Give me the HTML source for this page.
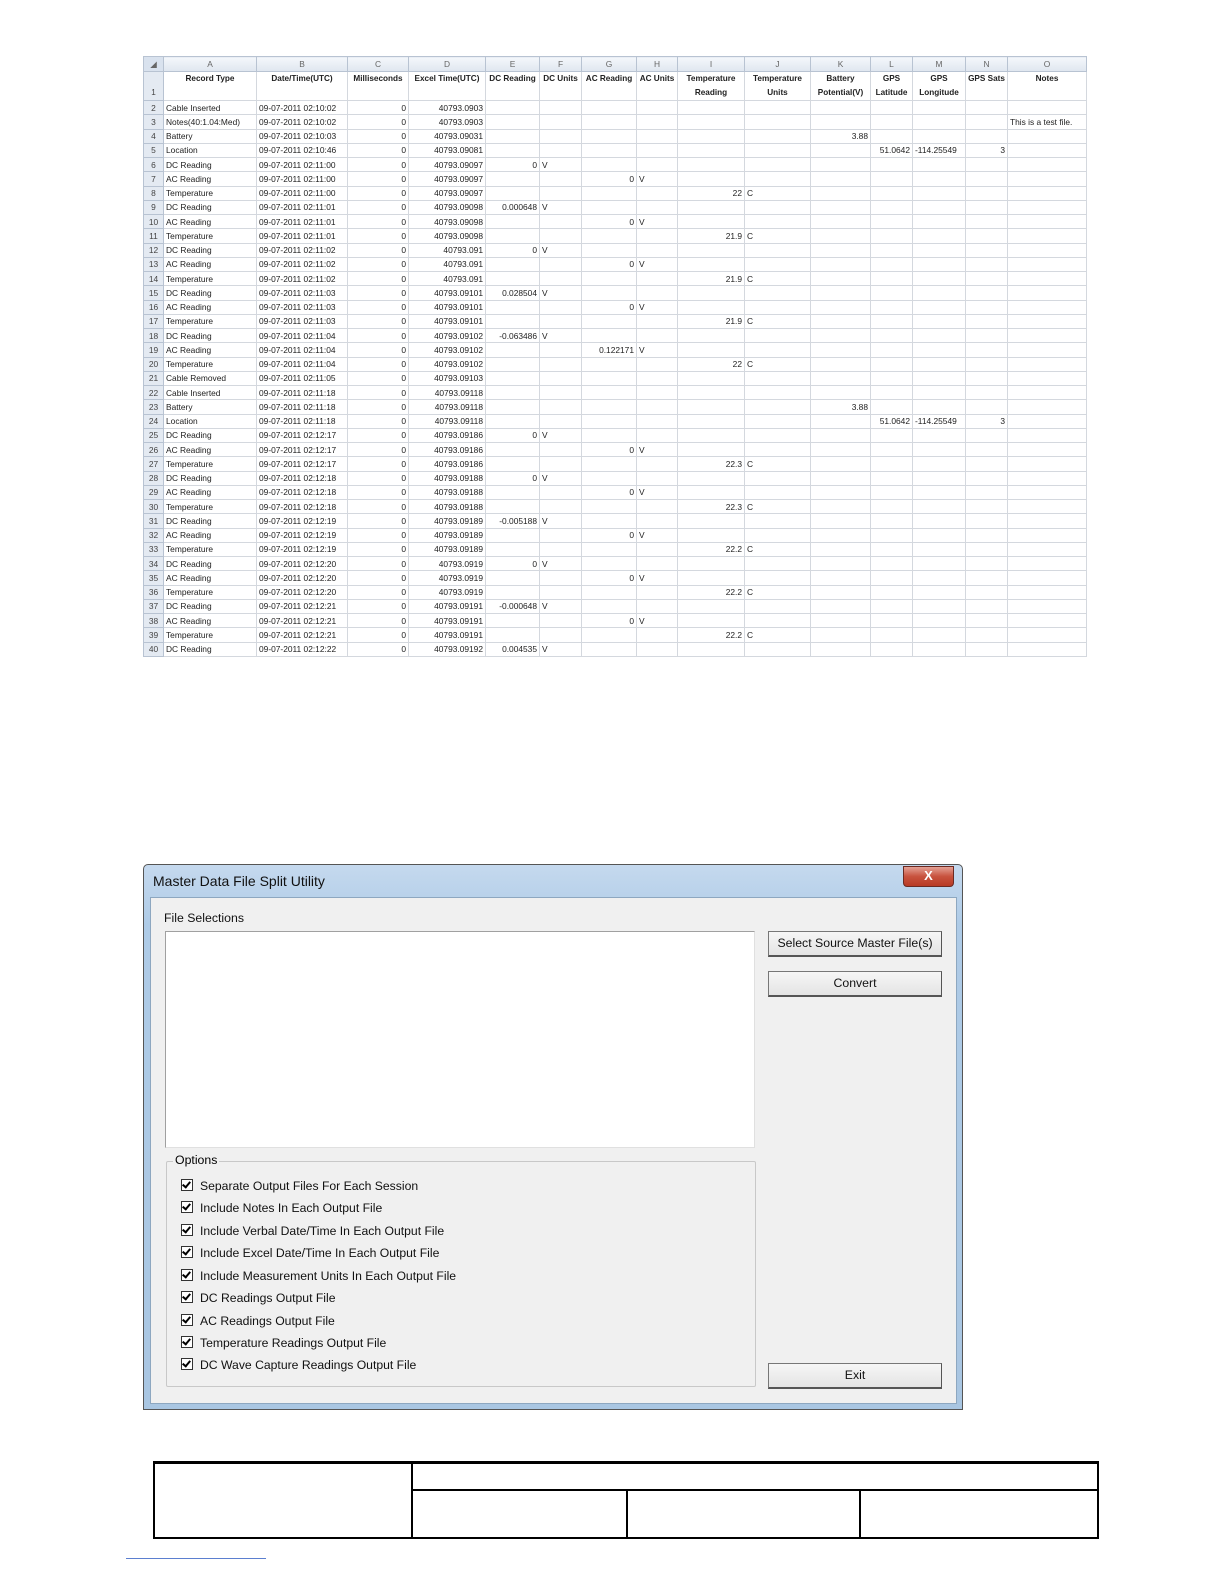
<!DOCTYPE html>
<html><head><meta charset="utf-8"><style>
html,body{margin:0;width:1224px;height:1584px;overflow:hidden}
body{background:#fff;position:relative;font-family:"Liberation Sans",sans-serif}
#ss{position:absolute;left:143px;top:56px;width:943px;border-collapse:collapse;table-layout:fixed;font-size:8.4px;color:#222}
#ss td{border:1px solid #d4d8de;padding:0 2px;height:13.26px;white-space:nowrap;overflow:hidden;line-height:12px}
#ss tr.let td{height:14px;background:linear-gradient(#f4f7fb,#dfe6ef);color:#666;text-align:center;border-color:#b8c3d2}
#ss tr.h1 td{height:27px;vertical-align:top;font-weight:bold;text-align:center;font-size:8.2px;line-height:14px;white-space:normal;padding:0 1px}
#ss td.rn{background:#e4eaf2;color:#444;text-align:center;border-color:#b8c3d2;padding:0}
#ss td.r{text-align:right}
.dlg{position:absolute;left:143px;top:864px;width:818px;height:544px;border:1px solid #555;border-radius:5px 5px 0 0;background:linear-gradient(#c5d9ee,#aecbe7 60px,#a9c6e2);}
.title{position:absolute;left:9px;top:8px;font-size:14px;color:#111}
.close{position:absolute;left:759px;top:1px;width:49px;height:19px;border:1px solid #6b2a22;border-radius:0 0 4px 4px;background:linear-gradient(#e4a195,#c8523e 50%,#b83a24);color:#fff;font-weight:bold;text-align:center;font-size:13px;line-height:18px}
.client{position:absolute;left:6px;top:32px;width:805px;height:505px;background:#f0f0f0;border:1px solid #8da7c0}
.lbl{position:absolute;font-size:12.3px;color:#111}
.list{position:absolute;left:14px;top:33px;width:588px;height:215px;background:#fff;border:1px solid #a0a0a0;border-right-color:#e0e0e0;border-bottom-color:#e0e0e0}
.grp{position:absolute;left:15px;top:263px;width:588px;height:224px;border:1px solid #c8c8c8;border-radius:2px}
.grp .cap{position:absolute;left:6px;top:-9px;background:#f0f0f0;padding:0 2px;font-size:12.3px}
.cb{position:absolute;left:14px;font-size:12.2px;color:#111;white-space:nowrap}
.cb i{display:inline-block;width:10px;height:10px;border:1px solid #333;background:#fff;vertical-align:-1px;margin-right:7px;position:relative;font-style:normal}
.cb i:after{content:"";position:absolute;left:2px;top:0px;width:3px;height:6px;border:solid #000;border-width:0 2px 2px 0;transform:rotate(40deg)}
.btn{position:absolute;left:617px;width:172px;height:23px;border:1px solid #777;border-right-color:#555;border-bottom:2px solid #555;background:linear-gradient(#f6f6f6,#e4e4e4);font-size:12.3px;text-align:center;line-height:23px;color:#111}
.bt{position:absolute;border:0 solid #000}
</style></head><body>
<table id="ss">
<colgroup><col style="width:20px"><col style="width:93px"><col style="width:91px"><col style="width:61px"><col style="width:77px"><col style="width:54px"><col style="width:42px"><col style="width:55px"><col style="width:41px"><col style="width:67px"><col style="width:66px"><col style="width:60px"><col style="width:42px"><col style="width:53px"><col style="width:42px"><col style="width:79px"></colgroup>
<tr class="let"><td class="rn" style="background:#d9e2ee">◢</td><td>A</td><td>B</td><td>C</td><td>D</td><td>E</td><td>F</td><td>G</td><td>H</td><td>I</td><td>J</td><td>K</td><td>L</td><td>M</td><td>N</td><td>O</td></tr>
<tr class="h1"><td class="rn" style="vertical-align:bottom;font-weight:normal">1</td><td>Record Type</td><td>Date/Time(UTC)</td><td>Milliseconds</td><td>Excel Time(UTC)</td><td>DC Reading</td><td>DC Units</td><td>AC Reading</td><td>AC Units</td><td>Temperature Reading</td><td>Temperature Units</td><td>Battery Potential(V)</td><td>GPS Latitude</td><td>GPS Longitude</td><td>GPS Sats</td><td>Notes</td></tr>
<tr><td class="rn">2</td><td>Cable Inserted</td><td>09-07-2011 02:10:02</td><td class="r">0</td><td class="r">40793.0903</td><td></td><td></td><td></td><td></td><td></td><td></td><td></td><td></td><td></td><td></td><td></td></tr>
<tr><td class="rn">3</td><td>Notes(40:1.04:Med)</td><td>09-07-2011 02:10:02</td><td class="r">0</td><td class="r">40793.0903</td><td></td><td></td><td></td><td></td><td></td><td></td><td></td><td></td><td></td><td></td><td>This is a test file.</td></tr>
<tr><td class="rn">4</td><td>Battery</td><td>09-07-2011 02:10:03</td><td class="r">0</td><td class="r">40793.09031</td><td></td><td></td><td></td><td></td><td></td><td></td><td class="r">3.88</td><td></td><td></td><td></td><td></td></tr>
<tr><td class="rn">5</td><td>Location</td><td>09-07-2011 02:10:46</td><td class="r">0</td><td class="r">40793.09081</td><td></td><td></td><td></td><td></td><td></td><td></td><td></td><td class="r">51.0642</td><td>-114.25549</td><td class="r">3</td><td></td></tr>
<tr><td class="rn">6</td><td>DC Reading</td><td>09-07-2011 02:11:00</td><td class="r">0</td><td class="r">40793.09097</td><td class="r">0</td><td>V</td><td></td><td></td><td></td><td></td><td></td><td></td><td></td><td></td><td></td></tr>
<tr><td class="rn">7</td><td>AC Reading</td><td>09-07-2011 02:11:00</td><td class="r">0</td><td class="r">40793.09097</td><td></td><td></td><td class="r">0</td><td>V</td><td></td><td></td><td></td><td></td><td></td><td></td><td></td></tr>
<tr><td class="rn">8</td><td>Temperature</td><td>09-07-2011 02:11:00</td><td class="r">0</td><td class="r">40793.09097</td><td></td><td></td><td></td><td></td><td class="r">22</td><td>C</td><td></td><td></td><td></td><td></td><td></td></tr>
<tr><td class="rn">9</td><td>DC Reading</td><td>09-07-2011 02:11:01</td><td class="r">0</td><td class="r">40793.09098</td><td class="r">0.000648</td><td>V</td><td></td><td></td><td></td><td></td><td></td><td></td><td></td><td></td><td></td></tr>
<tr><td class="rn">10</td><td>AC Reading</td><td>09-07-2011 02:11:01</td><td class="r">0</td><td class="r">40793.09098</td><td></td><td></td><td class="r">0</td><td>V</td><td></td><td></td><td></td><td></td><td></td><td></td><td></td></tr>
<tr><td class="rn">11</td><td>Temperature</td><td>09-07-2011 02:11:01</td><td class="r">0</td><td class="r">40793.09098</td><td></td><td></td><td></td><td></td><td class="r">21.9</td><td>C</td><td></td><td></td><td></td><td></td><td></td></tr>
<tr><td class="rn">12</td><td>DC Reading</td><td>09-07-2011 02:11:02</td><td class="r">0</td><td class="r">40793.091</td><td class="r">0</td><td>V</td><td></td><td></td><td></td><td></td><td></td><td></td><td></td><td></td><td></td></tr>
<tr><td class="rn">13</td><td>AC Reading</td><td>09-07-2011 02:11:02</td><td class="r">0</td><td class="r">40793.091</td><td></td><td></td><td class="r">0</td><td>V</td><td></td><td></td><td></td><td></td><td></td><td></td><td></td></tr>
<tr><td class="rn">14</td><td>Temperature</td><td>09-07-2011 02:11:02</td><td class="r">0</td><td class="r">40793.091</td><td></td><td></td><td></td><td></td><td class="r">21.9</td><td>C</td><td></td><td></td><td></td><td></td><td></td></tr>
<tr><td class="rn">15</td><td>DC Reading</td><td>09-07-2011 02:11:03</td><td class="r">0</td><td class="r">40793.09101</td><td class="r">0.028504</td><td>V</td><td></td><td></td><td></td><td></td><td></td><td></td><td></td><td></td><td></td></tr>
<tr><td class="rn">16</td><td>AC Reading</td><td>09-07-2011 02:11:03</td><td class="r">0</td><td class="r">40793.09101</td><td></td><td></td><td class="r">0</td><td>V</td><td></td><td></td><td></td><td></td><td></td><td></td><td></td></tr>
<tr><td class="rn">17</td><td>Temperature</td><td>09-07-2011 02:11:03</td><td class="r">0</td><td class="r">40793.09101</td><td></td><td></td><td></td><td></td><td class="r">21.9</td><td>C</td><td></td><td></td><td></td><td></td><td></td></tr>
<tr><td class="rn">18</td><td>DC Reading</td><td>09-07-2011 02:11:04</td><td class="r">0</td><td class="r">40793.09102</td><td class="r">-0.063486</td><td>V</td><td></td><td></td><td></td><td></td><td></td><td></td><td></td><td></td><td></td></tr>
<tr><td class="rn">19</td><td>AC Reading</td><td>09-07-2011 02:11:04</td><td class="r">0</td><td class="r">40793.09102</td><td></td><td></td><td class="r">0.122171</td><td>V</td><td></td><td></td><td></td><td></td><td></td><td></td><td></td></tr>
<tr><td class="rn">20</td><td>Temperature</td><td>09-07-2011 02:11:04</td><td class="r">0</td><td class="r">40793.09102</td><td></td><td></td><td></td><td></td><td class="r">22</td><td>C</td><td></td><td></td><td></td><td></td><td></td></tr>
<tr><td class="rn">21</td><td>Cable Removed</td><td>09-07-2011 02:11:05</td><td class="r">0</td><td class="r">40793.09103</td><td></td><td></td><td></td><td></td><td></td><td></td><td></td><td></td><td></td><td></td><td></td></tr>
<tr><td class="rn">22</td><td>Cable Inserted</td><td>09-07-2011 02:11:18</td><td class="r">0</td><td class="r">40793.09118</td><td></td><td></td><td></td><td></td><td></td><td></td><td></td><td></td><td></td><td></td><td></td></tr>
<tr><td class="rn">23</td><td>Battery</td><td>09-07-2011 02:11:18</td><td class="r">0</td><td class="r">40793.09118</td><td></td><td></td><td></td><td></td><td></td><td></td><td class="r">3.88</td><td></td><td></td><td></td><td></td></tr>
<tr><td class="rn">24</td><td>Location</td><td>09-07-2011 02:11:18</td><td class="r">0</td><td class="r">40793.09118</td><td></td><td></td><td></td><td></td><td></td><td></td><td></td><td class="r">51.0642</td><td>-114.25549</td><td class="r">3</td><td></td></tr>
<tr><td class="rn">25</td><td>DC Reading</td><td>09-07-2011 02:12:17</td><td class="r">0</td><td class="r">40793.09186</td><td class="r">0</td><td>V</td><td></td><td></td><td></td><td></td><td></td><td></td><td></td><td></td><td></td></tr>
<tr><td class="rn">26</td><td>AC Reading</td><td>09-07-2011 02:12:17</td><td class="r">0</td><td class="r">40793.09186</td><td></td><td></td><td class="r">0</td><td>V</td><td></td><td></td><td></td><td></td><td></td><td></td><td></td></tr>
<tr><td class="rn">27</td><td>Temperature</td><td>09-07-2011 02:12:17</td><td class="r">0</td><td class="r">40793.09186</td><td></td><td></td><td></td><td></td><td class="r">22.3</td><td>C</td><td></td><td></td><td></td><td></td><td></td></tr>
<tr><td class="rn">28</td><td>DC Reading</td><td>09-07-2011 02:12:18</td><td class="r">0</td><td class="r">40793.09188</td><td class="r">0</td><td>V</td><td></td><td></td><td></td><td></td><td></td><td></td><td></td><td></td><td></td></tr>
<tr><td class="rn">29</td><td>AC Reading</td><td>09-07-2011 02:12:18</td><td class="r">0</td><td class="r">40793.09188</td><td></td><td></td><td class="r">0</td><td>V</td><td></td><td></td><td></td><td></td><td></td><td></td><td></td></tr>
<tr><td class="rn">30</td><td>Temperature</td><td>09-07-2011 02:12:18</td><td class="r">0</td><td class="r">40793.09188</td><td></td><td></td><td></td><td></td><td class="r">22.3</td><td>C</td><td></td><td></td><td></td><td></td><td></td></tr>
<tr><td class="rn">31</td><td>DC Reading</td><td>09-07-2011 02:12:19</td><td class="r">0</td><td class="r">40793.09189</td><td class="r">-0.005188</td><td>V</td><td></td><td></td><td></td><td></td><td></td><td></td><td></td><td></td><td></td></tr>
<tr><td class="rn">32</td><td>AC Reading</td><td>09-07-2011 02:12:19</td><td class="r">0</td><td class="r">40793.09189</td><td></td><td></td><td class="r">0</td><td>V</td><td></td><td></td><td></td><td></td><td></td><td></td><td></td></tr>
<tr><td class="rn">33</td><td>Temperature</td><td>09-07-2011 02:12:19</td><td class="r">0</td><td class="r">40793.09189</td><td></td><td></td><td></td><td></td><td class="r">22.2</td><td>C</td><td></td><td></td><td></td><td></td><td></td></tr>
<tr><td class="rn">34</td><td>DC Reading</td><td>09-07-2011 02:12:20</td><td class="r">0</td><td class="r">40793.0919</td><td class="r">0</td><td>V</td><td></td><td></td><td></td><td></td><td></td><td></td><td></td><td></td><td></td></tr>
<tr><td class="rn">35</td><td>AC Reading</td><td>09-07-2011 02:12:20</td><td class="r">0</td><td class="r">40793.0919</td><td></td><td></td><td class="r">0</td><td>V</td><td></td><td></td><td></td><td></td><td></td><td></td><td></td></tr>
<tr><td class="rn">36</td><td>Temperature</td><td>09-07-2011 02:12:20</td><td class="r">0</td><td class="r">40793.0919</td><td></td><td></td><td></td><td></td><td class="r">22.2</td><td>C</td><td></td><td></td><td></td><td></td><td></td></tr>
<tr><td class="rn">37</td><td>DC Reading</td><td>09-07-2011 02:12:21</td><td class="r">0</td><td class="r">40793.09191</td><td class="r">-0.000648</td><td>V</td><td></td><td></td><td></td><td></td><td></td><td></td><td></td><td></td><td></td></tr>
<tr><td class="rn">38</td><td>AC Reading</td><td>09-07-2011 02:12:21</td><td class="r">0</td><td class="r">40793.09191</td><td></td><td></td><td class="r">0</td><td>V</td><td></td><td></td><td></td><td></td><td></td><td></td><td></td></tr>
<tr><td class="rn">39</td><td>Temperature</td><td>09-07-2011 02:12:21</td><td class="r">0</td><td class="r">40793.09191</td><td></td><td></td><td></td><td></td><td class="r">22.2</td><td>C</td><td></td><td></td><td></td><td></td><td></td></tr>
<tr><td class="rn">40</td><td>DC Reading</td><td>09-07-2011 02:12:22</td><td class="r">0</td><td class="r">40793.09192</td><td class="r">0.004535</td><td>V</td><td></td><td></td><td></td><td></td><td></td><td></td><td></td><td></td><td></td></tr>
</table>

<div class="dlg">
 <div class="title">Master Data File Split Utility</div>
 <div class="close">X</div>
 <div class="client">
  <div class="lbl" style="left:13px;top:13px">File Selections</div>
  <div class="list"></div>
  <div class="grp"><span class="cap">Options</span>
   <div class="cb" style="top:17px"><i></i>Separate Output Files For Each Session</div>
   <div class="cb" style="top:39px"><i></i>Include Notes In Each Output File</div>
   <div class="cb" style="top:62px"><i></i>Include Verbal Date/Time In Each Output File</div>
   <div class="cb" style="top:84px"><i></i>Include Excel Date/Time In Each Output File</div>
   <div class="cb" style="top:107px"><i></i>Include Measurement Units In Each Output File</div>
   <div class="cb" style="top:129px"><i></i>DC Readings Output File</div>
   <div class="cb" style="top:152px"><i></i>AC Readings Output File</div>
   <div class="cb" style="top:174px"><i></i>Temperature Readings Output File</div>
   <div class="cb" style="top:196px"><i></i>DC Wave Capture Readings Output File</div>
  </div>
  <div class="btn" style="top:33px">Select Source Master File(s)</div>
  <div class="btn" style="top:73px">Convert</div>
  <div class="btn" style="top:465px">Exit</div>
 </div>
</div>

<div class="bt" style="left:153px;top:1461px;width:942px;height:73px;border-width:3px 2px 2px 2px"></div>
<div class="bt" style="left:411px;top:1463px;height:74px;border-left-width:2px"></div>
<div class="bt" style="left:412px;top:1489px;width:685px;border-top-width:2px"></div>
<div class="bt" style="left:626px;top:1490px;height:47px;border-left-width:2px"></div>
<div class="bt" style="left:859px;top:1490px;height:47px;border-left-width:2px"></div>
<div style="position:absolute;left:126px;top:1558px;width:140px;height:1px;background:#5b7fd0"></div>
</body></html>
